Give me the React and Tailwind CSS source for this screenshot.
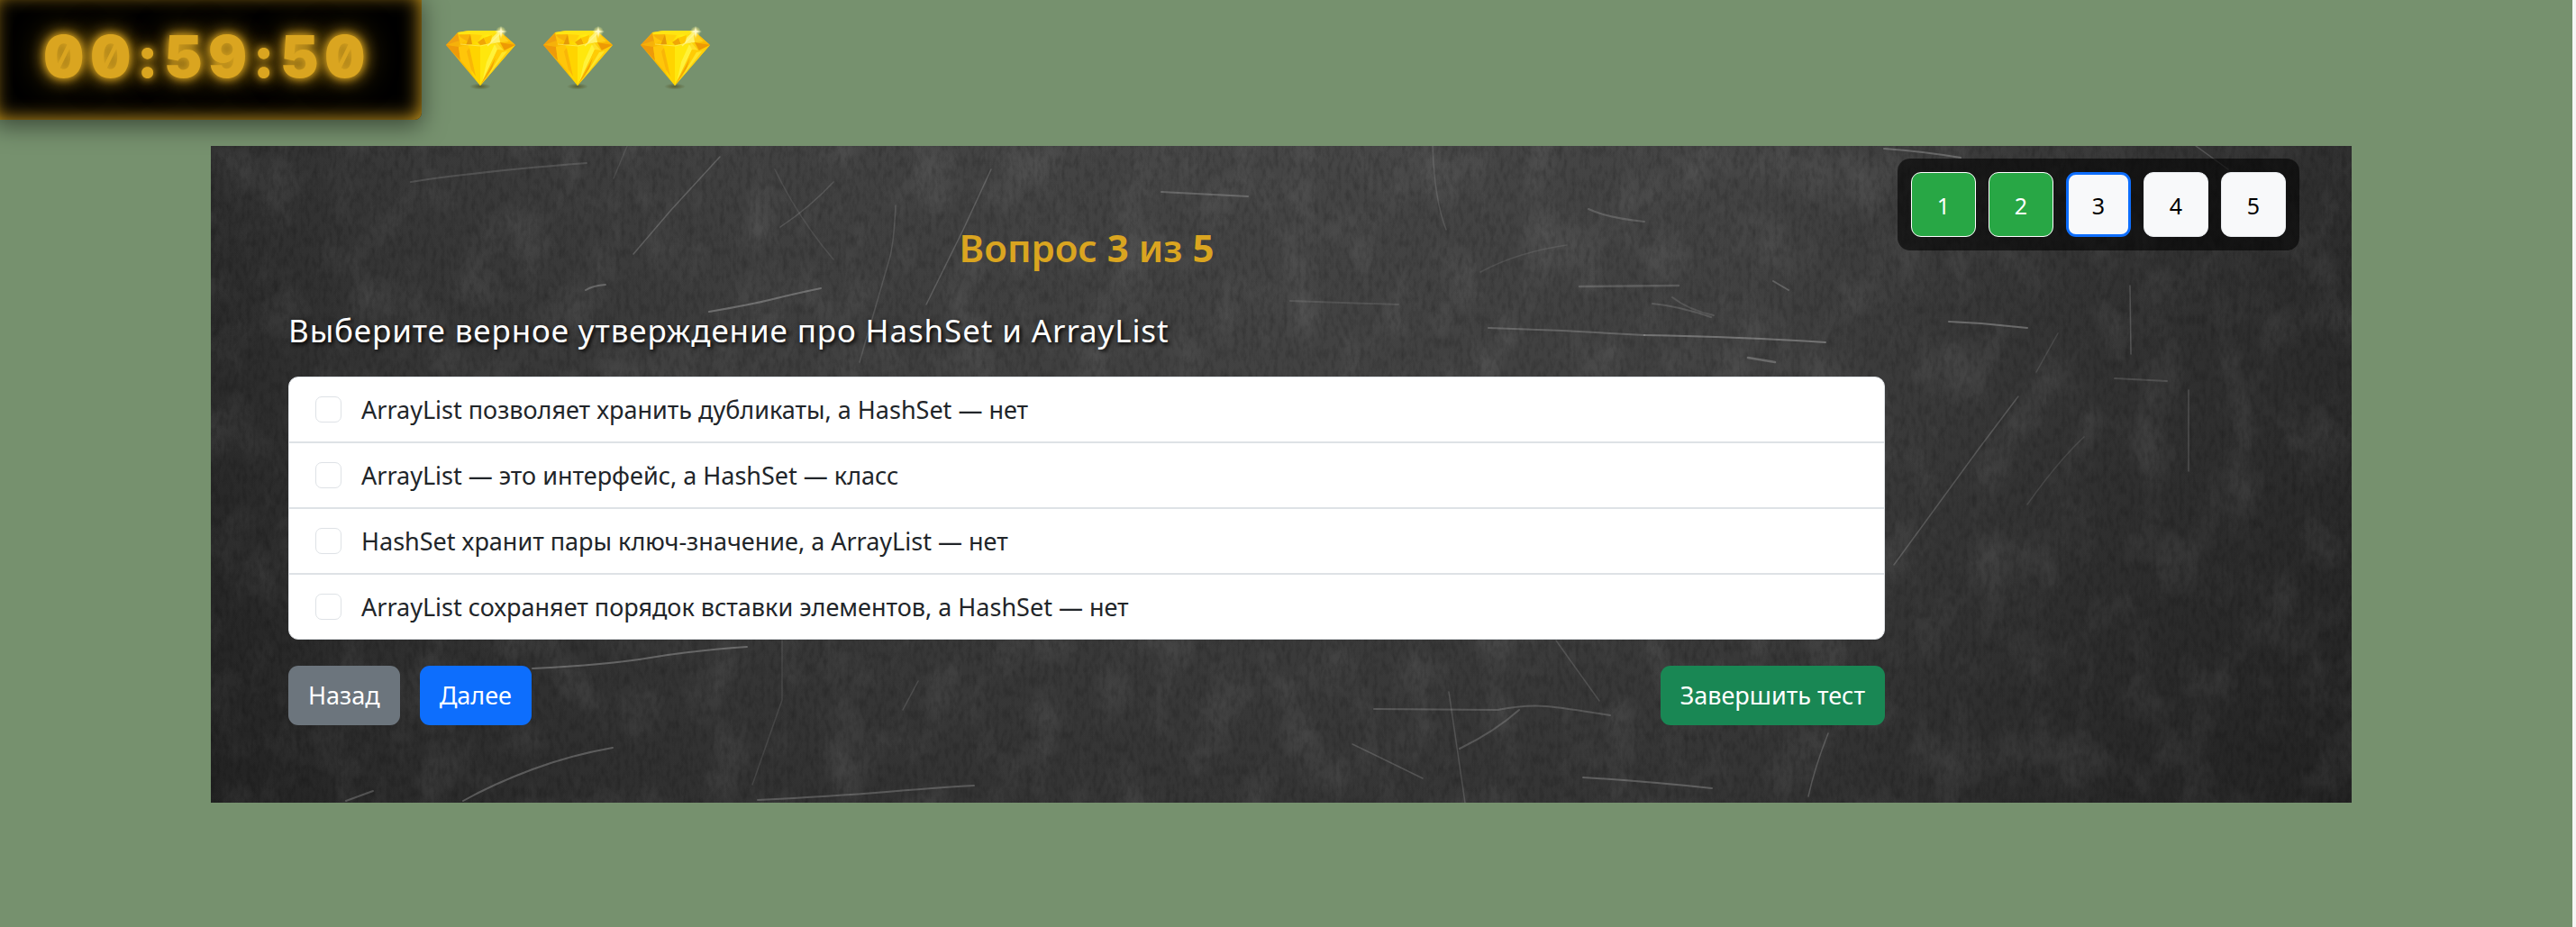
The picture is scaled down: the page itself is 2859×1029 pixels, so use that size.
import { useState } from "react";

const answers = [
  "ArrayList позволяет хранить дубликаты, а HashSet — нет",
  "ArrayList — это интерфейс, а HashSet — класс",
  "HashSet хранит пары ключ-значение, а ArrayList — нет",
  "ArrayList сохраняет порядок вставки элементов, а HashSet — нет",
];

const pages = [
  { n: 1, state: "done" },
  { n: 2, state: "done" },
  { n: 3, state: "current" },
  { n: 4, state: "open" },
  { n: 5, state: "open" },
];

const pageStyles = {
  done: "border border-white bg-[#28a745] text-white",
  current: "border-3 border-[#0d6efd] bg-[#f8f9fa] text-black",
  open: "border border-[#e9ecef] bg-[#f8f9fa] text-black",
};

// [path, stroke opacity, stroke width]
const scratches = [
  ["M565 12 L510 72 L469 120", 0.28, 1.5],
  ["M866 26 L835 93 L794 176", 0.26, 1.5],
  ["M691 40 Q665 68 632 90", 0.2, 1.5],
  ["M626 26 Q652 80 691 126", 0.14, 1.5],
  ["M760 66 Q758 110 753 126 L720 240", 0.2, 1.5],
  ["M553 184 Q600 176 624 170 T677 158", 0.38, 2],
  ["M416 160 Q424 155 438 154", 0.35, 2],
  ["M1356 0 Q1358 60 1371 93", 0.18, 1.5],
  ["M1055 51 L1151 56", 0.3, 2],
  ["M1519 156 L1629 155", 0.25, 2.5],
  ["M1600 175 Q1630 178 1665 190", 0.22, 2],
  ["M1622 168 Q1640 182 1668 188", 0.18, 2],
  ["M1418 202 L1500 205 L1591 210", 0.3, 2],
  ["M1591 210 Q1700 212 1792 218", 0.42, 2],
  ["M1706 235 L1736 240", 0.35, 2.5],
  ["M1734 150 L1751 160", 0.3, 2],
  ["M1529 70 Q1550 80 1591 84", 0.25, 2],
  ["M1505 110 Q1450 118 1409 140", 0.14, 1.5],
  ["M1198 172 L1318 176", 0.16, 2],
  ["M462 0 L447 36", 0.14, 1.5],
  ["M222 40 Q300 28 417 19", 0.2, 2],
  ["M357 580 Q440 576 488 568 T595 556", 0.38, 2],
  ["M446 668 Q400 676 357 692 T280 727", 0.34, 2],
  ["M607 726 Q690 722 750 717 T847 710", 0.3, 2],
  ["M634 549 L634 615 L601 709", 0.15, 1.5],
  ["M785 594 L768 626", 0.18, 1.5],
  ["M1291 625 L1428 626 Q1460 620 1482 622 T1553 632", 0.26, 2],
  ["M1374 606 L1392 729", 0.22, 1.5],
  ["M1452 626 Q1425 650 1386 669", 0.26, 2],
  ["M1267 664 L1345 702", 0.24, 1.5],
  ["M1493 549 L1541 616", 0.2, 1.5],
  ["M1523 701 Q1590 705 1666 713", 0.32, 2],
  ["M1795 652 Q1780 690 1773 722", 0.28, 1.5],
  ["M2006 278 L1963 335 L1868 465", 0.26, 1.5],
  ["M1929 195 L1965 197 L2016 202", 0.4, 2],
  ["M2130 155 L2131 231", 0.26, 1.5],
  ["M2195 271 L2195 361", 0.24, 1.5],
  ["M2079 323 Q2050 350 2016 398", 0.16, 1.5],
  ["M2050 208 L2026 251", 0.16, 1.5],
  ["M2113 258 L2171 261", 0.2, 2],
  ["M1857 3 Q1900 6 1942 13", 0.35, 2],
  ["M2203 0 L2239 26", 0.25, 1.5],
  ["M150 727 L180 716", 0.3, 2],
];

function Chalkboard() {
  return (
    <svg
      aria-hidden="true"
      className="absolute inset-0 h-full w-full"
      viewBox="0 0 2376 729"
      preserveAspectRatio="none"
    >
      <defs>
        <linearGradient id="side" x1="0" y1="0" x2="1" y2="0">
          <stop offset="0" stopColor="#2a2a2a" />
          <stop offset="0.08" stopColor="#343434" />
          <stop offset="0.25" stopColor="#3d3d3d" />
          <stop offset="0.5" stopColor="#424242" />
          <stop offset="0.72" stopColor="#404040" />
          <stop offset="0.88" stopColor="#323232" />
          <stop offset="1" stopColor="#2b2b2b" />
        </linearGradient>
        <linearGradient id="fall" x1="0" y1="0" x2="0" y2="1">
          <stop offset="0" stopColor="#fff" stopOpacity="0.02" />
          <stop offset="0.4" stopColor="#000" stopOpacity="0" />
          <stop offset="1" stopColor="#000" stopOpacity="0.2" />
        </linearGradient>
        <filter id="smudge" x="0" y="0" width="100%" height="100%">
          <feTurbulence type="fractalNoise" baseFrequency="0.022 0.014" numOctaves="5" seed="8" />
          <feColorMatrix values="0 0 0 0 1  0 0 0 0 1  0 0 0 0 1  1.2 0 0 0 -0.55" />
        </filter>
        <filter id="grain" x="0" y="0" width="100%" height="100%">
          <feTurbulence type="fractalNoise" baseFrequency="0.2 0.08" numOctaves="3" seed="3" />
          <feColorMatrix values="0 0 0 0 0  0 0 0 0 0  0 0 0 0 0  0 1.2 0 0 -0.5" />
        </filter>
      </defs>
      <rect width="2376" height="729" fill="url(#side)" />
      <rect width="2376" height="729" fill="url(#fall)" />
      <rect width="2376" height="729" filter="url(#smudge)" opacity="0.14" />
      <rect width="2376" height="729" filter="url(#grain)" opacity="0.3" />
      <g fill="none" stroke="#dcdcdc" strokeLinecap="round" opacity="0.8">
        {scratches.map(([d, o, w]) => (
          <path key={d} d={d} strokeOpacity={o} strokeWidth={w} />
        ))}
      </g>
    </svg>
  );
}

function GemDefs() {
  return (
    <svg aria-hidden="true" className="absolute h-0 w-0">
      <defs>
        <linearGradient id="gemBody" x1="0" y1="0" x2="1" y2="0">
          <stop offset="0" stopColor="#f39a06" />
          <stop offset="0.4" stopColor="#ffd800" />
          <stop offset="0.6" stopColor="#ffee12" />
          <stop offset="1" stopColor="#f8a800" />
        </linearGradient>
        <radialGradient id="gemGlow">
          <stop offset="0" stopColor="#fffff0" />
          <stop offset="0.3" stopColor="#fff59a" stopOpacity="0.8" />
          <stop offset="1" stopColor="#fff27a" stopOpacity="0" />
        </radialGradient>
        <radialGradient id="gemShade">
          <stop offset="0" stopColor="#4c4a1c" stopOpacity="0.7" />
          <stop offset="1" stopColor="#4c4a1c" stopOpacity="0" />
        </radialGradient>
      </defs>
    </svg>
  );
}

function Gem() {
  return (
    <svg className="h-[72px] w-[77px] shrink-0" viewBox="0 0 77 72" role="img" aria-label="Жизнь">
      <ellipse cx="38" cy="67" rx="12" ry="3.5" fill="url(#gemShade)" />
      <path d="M13 7 L25 5 L59 5 L77 21 L38 66 L0 21 Z" fill="url(#gemBody)" />
      <path d="M13 7 L25 5 L59 5 L62 8 L40 10 L14 9 Z" fill="#ffe413" />
      <path d="M13 8 L15 17 L0 21 Z" fill="#efa010" />
      <path d="M13 8 L24 15 L16 20 Z" fill="#ffc60a" />
      <path d="M0 21 L15 16 L14 23 Z" fill="#f6b10a" />
      <path d="M14 10 L27 9 L24 17 L17 13 Z" fill="#f7b20a" />
      <path d="M27 9 L40 10 L35 18 L28 15 Z" fill="#ffd20a" />
      <path d="M27 9 L29 20 L22 21 Z" fill="#e59a08" />
      <path d="M35 18 L42 13 L45 20 L38 21 Z" fill="#f0a606" />
      <path d="M42 13 L51 10 L50 19 L45 20 Z" fill="#ffc800" />
      <path d="M59 5 L51 13 L49 19 L60 18 Z" fill="#fff26b" />
      <path d="M59 5 L60 18 L70 17 Z" fill="#ffd21b" />
      <path d="M59 5 L77 21 L70 17 Z" fill="#ffc107" />
      <path d="M60 18 L77 21 L65 27 Z" fill="#ee9a04" />
      <path d="M56 18 L64 27 L54 26 Z" fill="#ffdf2a" />
      <path d="M0 21 L14 23 L16 38 Z" fill="#ee9a0a" />
      <path d="M14 23 L25 21 L29 52 L16 38 Z" fill="#ffc60a" />
      <path d="M3 23 L26 50 L38 66 L14 36 Z" fill="#f5a608" opacity="0.8" />
      <path d="M25 21 L38 22 L38 66 L29 50 Z" fill="#ffd400" />
      <path d="M26 24 L33 56 L28 48 L23 28 Z" fill="#f7b007" opacity="0.8" />
      <path d="M38 22 L54 20 L45 46 L38 66 Z" fill="#ffe70d" />
      <path d="M54 20 L57 26 L40 63 L45 40 Z" fill="#fff23a" />
      <path d="M57 26 L65 27 L38 66 Z" fill="#ffcb05" />
      <path d="M55 35 L50 50 L38 66 Z" fill="#f3a404" />
      <path d="M65 27 L77 21 L38 66 Z" fill="#ffd00a" />
      <path d="M62 29 L68 28 L46 56 Z" fill="#ffe52b" />
      <path d="M16 20 L38 22 L56 18" fill="none" stroke="#fff07a" strokeWidth="0.7" opacity="0.8" />
      <circle cx="61" cy="6" r="6" fill="url(#gemGlow)" />
      <path d="M61 0 L62 5 L68 6 L62 7 L61 14 L60 7 L54 6 L60 5 Z" fill="#fffbd0" opacity="0.8" />
      <path d="M61 7 L46 22" stroke="#fff9b0" strokeWidth="1.5" opacity="0.5" />
    </svg>
  );
}

export default function App() {
  const [picked, setPicked] = useState([]);
  const toggle = (i) =>
    setPicked((p) => (p.includes(i) ? p.filter((x) => x !== i) : [...p, i]));

  return (
    <div className="min-h-screen overflow-hidden border-r-4 border-[#f5f6f5] bg-[#76916e] font-['Noto_Sans','Open_Sans',sans-serif] text-[27px] leading-[43px] text-[#212529]">
      <GemDefs />
      <header className="flex items-center">
        <div className="-mt-2 -ml-2 flex h-[141px] items-center rounded-lg bg-black px-[56px] shadow-[0_7px_27px_rgba(0,0,0,0.5),inset_0_0_22px_#daa520]">
          <time className="font-['Inter',sans-serif] text-[64px] leading-none font-black tracking-widest text-[#daa520] slashed-zero [text-shadow:0_0_9px_#daa520,0_0_18px_#daa520,0_0_36px_rgba(218,165,32,0.5)]">
            00:59:50
          </time>
        </div>
        <div className="-mt-1 ml-[27px] flex gap-[31px]">
          <Gem />
          <Gem />
          <Gem />
        </div>
      </header>

      <div className="pr-[11px]">
        <main className="relative mx-auto mt-[29px] flex max-w-[2376px] items-start bg-[#333]">
          <Chalkboard />
          <section className="relative grow pt-[87px] pr-[14px] pb-[86px] pl-[86px]">
            <h1 className="mb-[43px] text-center text-[42px] leading-[52px] font-semibold text-[#daa520]">
              Вопрос <b className="font-bold">3</b> из <b className="font-bold">5</b>
            </h1>
            <form onSubmit={(e) => e.preventDefault()}>
              <fieldset>
                <legend className="mb-[29px] text-[35px] leading-[45px] tracking-wide text-white [text-shadow:2px_2px_4px_#000]">
                  Выберите верное утверждение про HashSet и ArrayList
                </legend>
                <ul className="divide-y-2 divide-[#dee2e6] overflow-hidden rounded-[11px] border border-[#dee2e6] bg-white">
                  {answers.map((text, i) => (
                    <li key={text}>
                      <label className="flex items-center gap-[22px] px-[29px] py-[14px]">
                        <input
                          type="checkbox"
                          checked={picked.includes(i)}
                          onChange={() => toggle(i)}
                          className="h-[29px] w-[29px] shrink-0 appearance-none rounded-[7px] border border-[#dee2e6] bg-white checked:border-[#0d6efd] checked:bg-[#0d6efd]"
                        />
                        {text}
                      </label>
                    </li>
                  ))}
                </ul>
              </fieldset>
              <div className="mt-[29px] flex gap-[22px] text-white">
                <button type="button" className="rounded-[11px] bg-[#6c757d] px-[22px] py-[11px] leading-[44px]">
                  Назад
                </button>
                <button type="button" className="rounded-[11px] bg-[#0d6efd] px-[22px] py-[11px] leading-[44px]">
                  Далее
                </button>
                <button type="submit" className="ml-auto rounded-[11px] bg-[#198754] px-[22px] py-[11px] leading-[44px]">
                  Завершить тест
                </button>
              </div>
            </form>
          </section>
          <nav
            aria-label="Вопросы"
            className="relative mt-[14px] mr-[58px] flex gap-[14px] rounded-[14px] bg-black/60 p-[15px] text-[25px]"
          >
            {pages.map(({ n, state }) => (
              <button
                key={n}
                type="button"
                aria-current={state === "current" ? "step" : undefined}
                className={`h-[72px] w-[72px] rounded-[11px] pt-[2px] ${pageStyles[state]}`}
              >
                {n}
              </button>
            ))}
          </nav>
        </main>
      </div>
    </div>
  );
}
